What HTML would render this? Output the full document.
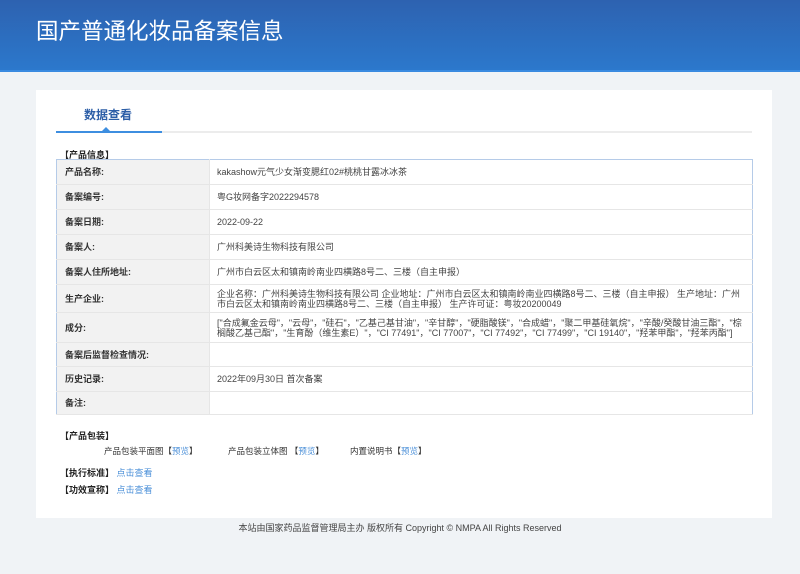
<!DOCTYPE html>
<html><head><meta charset="utf-8">
<style>
*{margin:0;padding:0;box-sizing:border-box}
body{width:800px;height:574px;overflow:hidden;background:#f0f3f6;font-family:"Liberation Sans","Noto Sans CJK SC",sans-serif;color:#333;position:relative}
.hd{position:absolute;left:0;top:0;width:800px;height:72px;background:linear-gradient(180deg,#2d62b0 0%,#2c78cc 100%);border-bottom:2px solid #3a8ae0}
.hd h1{position:absolute;left:36px;top:14px;font-size:22.5px;font-weight:normal;color:#fff;font-family:"Noto Sans CJK SC",sans-serif}
.card{position:absolute;left:36px;top:90px;width:736px;height:428px;background:#fff}
.tab{position:absolute;left:48px;top:16px;font-size:12px;font-weight:bold;color:#2c5ea7;font-family:"Noto Sans CJK SC",sans-serif}
.line{position:absolute;left:20px;top:41px;width:696px;height:2px;background:#ececec}
.line2{position:absolute;left:20px;top:41px;width:106px;height:2px;background:#3d8ee0}
.tri{position:absolute;left:66px;top:37px;width:0;height:0;border-left:4px solid transparent;border-right:4px solid transparent;border-bottom:4px solid #3d8ee0}
.sec{position:absolute;left:24px;font-size:9px;font-weight:bold;color:#222}
table{position:absolute;left:20px;top:69px;width:697px;border-collapse:collapse;border:1px solid #b5cbe8;font-size:9px}
td{border-bottom:1px solid #e6e6e6;vertical-align:middle;line-height:10px}
td.l{width:153px;background:#f2f2f2;font-weight:bold;padding-left:8px;color:#333;border-right:1px solid #e6e6e6}
td.v{padding-left:7px;color:#444;padding-right:8px}
.a{color:#4a8fd8}
.pk{position:absolute;top:355px;font-size:8.5px;color:#333}
.ft{position:absolute;left:0;width:800px;top:521px;text-align:center;font-size:9px;color:#444}
</style></head><body>
<div class="hd"><h1>国产普通化妆品备案信息</h1></div>
<div class="card">
<div class="tab">数据查看</div>
<div class="line"></div><div class="line2"></div><div class="tri"></div>
<div class="sec" style="top:58px">【产品信息】</div>
<table>
<tr style="height:25px"><td class="l">产品名称:</td><td class="v">kakashow元气少女渐变腮红02#桃桃甘露冰冰茶</td></tr>
<tr style="height:25px"><td class="l">备案编号:</td><td class="v">粤G妆网备字2022294578</td></tr>
<tr style="height:25px"><td class="l">备案日期:</td><td class="v">2022-09-22</td></tr>
<tr style="height:25px"><td class="l">备案人:</td><td class="v">广州科美诗生物科技有限公司</td></tr>
<tr style="height:25px"><td class="l">备案人住所地址:</td><td class="v">广州市白云区太和镇南岭南业四横路8号二、三楼（自主申报）</td></tr>
<tr style="height:28px"><td class="l">生产企业:</td><td class="v">企业名称：广州科美诗生物科技有限公司 企业地址：广州市白云区太和镇南岭南业四横路8号二、三楼（自主申报） 生产地址：广州市白云区太和镇南岭南业四横路8号二、三楼（自主申报） 生产许可证：粤妆20200049</td></tr>
<tr style="height:30px"><td class="l">成分:</td><td class="v">["合成氟金云母"，"云母"，"硅石"，"乙基己基甘油"，"辛甘醇"，"硬脂酸镁"，"合成蜡"，"聚二甲基硅氧烷"，"辛酸/癸酸甘油三酯"，"棕榈酸乙基己酯"，"生育酚（维生素E）"，"CI 77491"，"CI 77007"，"CI 77492"，"CI 77499"，"CI 19140"，"羟苯甲酯"，"羟苯丙酯"]</td></tr>
<tr style="height:24px"><td class="l">备案后监督检查情况:</td><td class="v"></td></tr>
<tr style="height:25px"><td class="l">历史记录:</td><td class="v">2022年09月30日 首次备案</td></tr>
<tr style="height:23px"><td class="l">备注:</td><td class="v"></td></tr>
</table>
<div class="sec" style="top:339px">【产品包装】</div>
<div class="pk" style="left:68px">产品包装平面图【<span class="a">预览</span>】</div>
<div class="pk" style="left:192px">产品包装立体图 【<span class="a">预览</span>】</div>
<div class="pk" style="left:314px">内置说明书【<span class="a">预览</span>】</div>
<div class="sec" style="top:376px">【执行标准】 <span class="a" style="font-weight:normal">点击查看</span></div>
<div class="sec" style="top:393px">【功效宣称】 <span class="a" style="font-weight:normal">点击查看</span></div>
</div>
<div class="ft">本站由国家药品监督管理局主办 版权所有 Copyright © NMPA All Rights Reserved</div>
</body></html>
